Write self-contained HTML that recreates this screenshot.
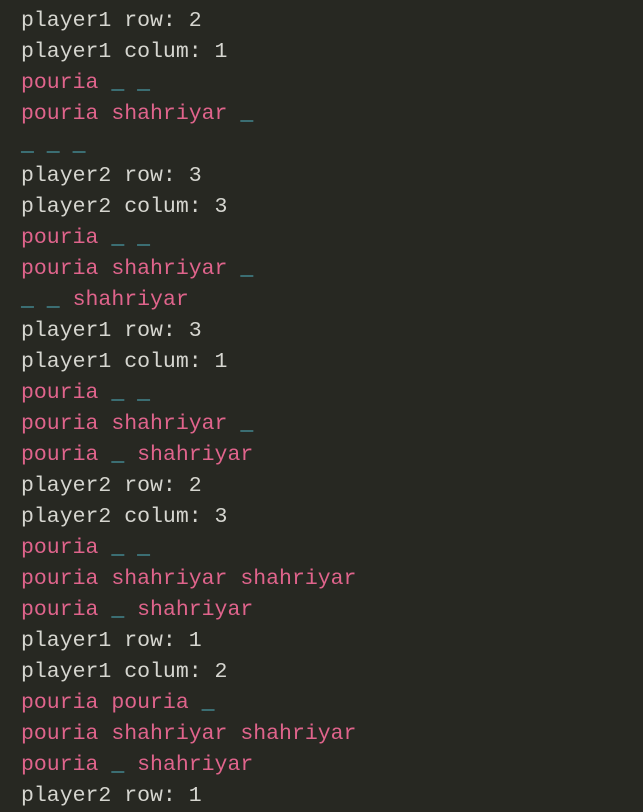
<!DOCTYPE html>
<html><head><meta charset="utf-8"><style>
html,body{margin:0;padding:0;background:#272822;width:643px;height:811px;overflow:hidden}
pre{position:absolute;left:21px;top:-25px;margin:0;font-family:"Liberation Mono",monospace;font-size:21.5px;line-height:31px;color:#d6d6d0;white-space:pre}
.p{color:#e0648c}.c{color:#4fb3c4}
</style></head><body><pre><span class="c">_ _ _</span>
player1 row: 2
player1 colum: 1
<span class="p">pouria</span> <span class="c">_ _</span>
<span class="p">pouria shahriyar</span> <span class="c">_</span>
<span class="c">_ _ _</span>
player2 row: 3
player2 colum: 3
<span class="p">pouria</span> <span class="c">_ _</span>
<span class="p">pouria shahriyar</span> <span class="c">_</span>
<span class="c">_ _</span> <span class="p">shahriyar</span>
player1 row: 3
player1 colum: 1
<span class="p">pouria</span> <span class="c">_ _</span>
<span class="p">pouria shahriyar</span> <span class="c">_</span>
<span class="p">pouria</span> <span class="c">_</span> <span class="p">shahriyar</span>
player2 row: 2
player2 colum: 3
<span class="p">pouria</span> <span class="c">_ _</span>
<span class="p">pouria shahriyar shahriyar</span>
<span class="p">pouria</span> <span class="c">_</span> <span class="p">shahriyar</span>
player1 row: 1
player1 colum: 2
<span class="p">pouria pouria</span> <span class="c">_</span>
<span class="p">pouria shahriyar shahriyar</span>
<span class="p">pouria</span> <span class="c">_</span> <span class="p">shahriyar</span>
player2 row: 1
</pre></body></html>
